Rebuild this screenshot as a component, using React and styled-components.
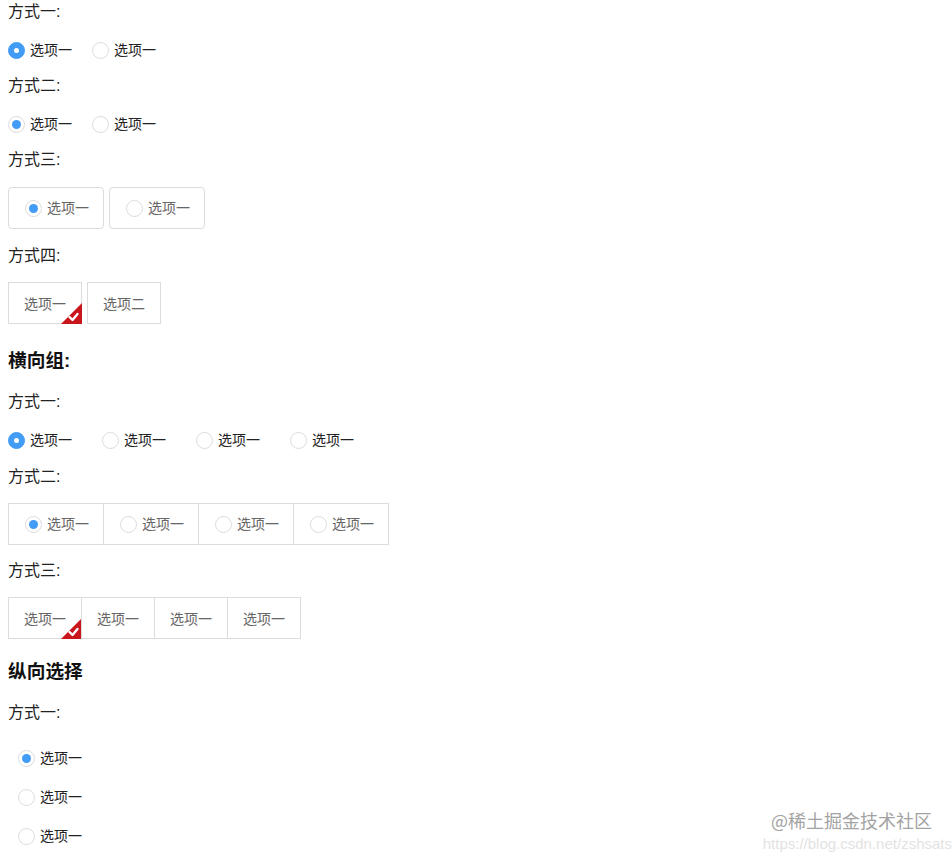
import React from 'react'
import styled, { createGlobalStyle, css } from 'styled-components'

const blue = '#429cf6'
const line = '#dcdcdc'

const GlobalStyle = createGlobalStyle`
  html, body {
    margin: 0;
    padding: 0;
    background: #fff;
  }
  body {
    font-family: "Liberation Sans", "Noto Sans CJK SC", sans-serif;
    color: #222;
  }
`

const Page = styled.div`
  position: relative;
  width: 952px;
  height: 855px;
  padding-left: 8px;
  box-sizing: border-box;
  display: flex;
  flex-direction: column;
  overflow: hidden;
`

const Caption = styled.div`
  height: 24px;
  margin-top: ${p => p.$top ?? 13}px;
  display: flex;
  align-items: center;
  font-size: 16px;
  line-height: 24px;
  color: #222;
`

const Heading = styled.h3`
  margin: ${p => p.$top ?? 23}px 0 0;
  height: 28px;
  display: flex;
  align-items: center;
  font-size: 18.72px;
  font-weight: bold;
  line-height: 28px;
  color: #111;
`

const RadioRow = styled.div`
  height: 24px;
  margin-top: ${p => p.$top ?? 13}px;
  display: flex;
  align-items: center;
  gap: ${p => p.$gap}px;
  padding-left: ${p => p.$indent || 0}px;
`

const Option = styled.label`
  display: flex;
  align-items: center;
  gap: 5px;
  font-size: 14px;
  line-height: 20px;
  color: ${p => p.$muted ? '#666' : '#222'};
  cursor: pointer;
`

const Dot = styled.span`
  position: relative;
  width: 17px;
  height: 17px;
  box-sizing: border-box;
  border-radius: 50%;
  border: 1px solid ${line};
  background: #fff;
  flex: none;

  ${p => p.$checked && p.$solid && css`
    border-color: ${blue};
    background: ${blue};
    &::after {
      content: '';
      position: absolute;
      left: 50%;
      top: 50%;
      width: 5px;
      height: 5px;
      margin: -2.5px 0 0 -2.5px;
      border-radius: 50%;
      background: #fff;
    }
  `}

  ${p => p.$checked && !p.$solid && css`
    &::after {
      content: '';
      position: absolute;
      left: 50%;
      top: 50%;
      width: 9px;
      height: 9px;
      margin: -4.5px 0 0 -4.5px;
      border-radius: 50%;
      background: ${blue};
    }
  `}
`

const BoxRow = styled.div`
  height: 42px;
  margin-top: ${p => p.$top ?? 15}px;
  display: flex;
  gap: ${p => p.$joined ? 0 : 6}px;
`

const Box = styled.div`
  position: relative;
  width: ${p => p.$w}px;
  height: 42px;
  box-sizing: border-box;
  border: 1px solid ${line};
  border-radius: ${p => p.$round ? 4 : 0}px;
  display: flex;
  align-items: center;
  justify-content: ${p => p.$center ? 'center' : 'flex-start'};
  padding-left: ${p => p.$center ? 0 : 16}px;
  font-size: 14px;
  color: #666;
  background: #fff;

  & + & {
    margin-left: ${p => p.$joined ? -1 : 0}px;
  }
`

const Corner = styled.svg`
  position: absolute;
  right: -1px;
  bottom: -1px;
  width: 21px;
  height: 21px;
`

const CheckCorner = () => (
  <Corner viewBox="0 0 21 21">
    <polygon points="21,0 21,21 0,21" fill="#c9161d" />
    <polyline points="8.5,14 11.5,17 16.5,11" fill="none" stroke="#fff" strokeWidth="2.4" strokeLinecap="round" strokeLinejoin="round" />
  </Corner>
)

const Watermark = styled.div`
  position: absolute;
  right: 8px;
  bottom: 3px;
  display: flex;
  flex-direction: column;
  align-items: flex-end;
  pointer-events: none;
`

const MarkTitle = styled.span`
  font-family: "Noto Sans CJK SC", sans-serif;
  font-size: 18px;
  line-height: 20px;
  color: #a3a3a3;
  margin-right: 12px;
`

const MarkUrl = styled.span`
  font-family: "Liberation Sans", sans-serif;
  font-size: 15px;
  line-height: 16px;
  margin-top: 6px;
  color: #e3e3e3;
  margin-right: -8px;
`

const Radio = ({ checked, solid, muted, children }) => (
  <Option $muted={muted}>
    <Dot $checked={checked} $solid={solid} />
    {children}
  </Option>
)

const App = () => (
  <Page>
    <GlobalStyle />

    <Caption $top={0}>方式一:</Caption>
    <RadioRow $gap={20} $top={14}>
      <Radio checked solid>选项一</Radio>
      <Radio solid>选项一</Radio>
    </RadioRow>

    <Caption $top={12}>方式二:</Caption>
    <RadioRow $gap={20} $top={14}>
      <Radio checked>选项一</Radio>
      <Radio>选项一</Radio>
    </RadioRow>

    <Caption $top={12}>方式三:</Caption>
    <BoxRow>
      <Box $w={96} $round>
        <Radio checked muted>选项一</Radio>
      </Box>
      <Box $w={96} $round>
        <Radio muted>选项一</Radio>
      </Box>
    </BoxRow>

    <Caption $top={15}>方式四:</Caption>
    <BoxRow $top={14}>
      <Box $w={74} $center>
        选项一
        <CheckCorner />
      </Box>
      <Box $w={74} $center>选项二</Box>
    </BoxRow>

    <Heading>横向组:</Heading>
    <Caption $top={15}>方式一:</Caption>
    <RadioRow $gap={30} $top={14}>
      <Radio checked solid>选项一</Radio>
      <Radio solid>选项一</Radio>
      <Radio solid>选项一</Radio>
      <Radio solid>选项一</Radio>
    </RadioRow>

    <Caption>方式二:</Caption>
    <BoxRow $joined $top={14}>
      {[true, false, false, false].map((on, i) => (
        <Box key={i} $w={96} $joined>
          <Radio checked={on} muted>选项一</Radio>
        </Box>
      ))}
    </BoxRow>

    <Caption $top={14}>方式三:</Caption>
    <BoxRow $joined $top={14}>
      {[0, 1, 2, 3].map(i => (
        <Box key={i} $w={74} $joined $center>
          选项一
          {i === 0 && <CheckCorner />}
        </Box>
      ))}
    </BoxRow>

    <Heading $top={19}>纵向选择</Heading>
    <Caption $top={15}>方式一:</Caption>
    <RadioRow $indent={10} $top={21}>
      <Radio checked>选项一</Radio>
    </RadioRow>
    <RadioRow $indent={10} $top={15}>
      <Radio>选项一</Radio>
    </RadioRow>
    <RadioRow $indent={10} $top={15}>
      <Radio>选项一</Radio>
    </RadioRow>

    <Watermark>
      <MarkTitle>@稀土掘金技术社区</MarkTitle>
      <MarkUrl>https://blog.csdn.net/zshsats</MarkUrl>
    </Watermark>
  </Page>
)

export default App
